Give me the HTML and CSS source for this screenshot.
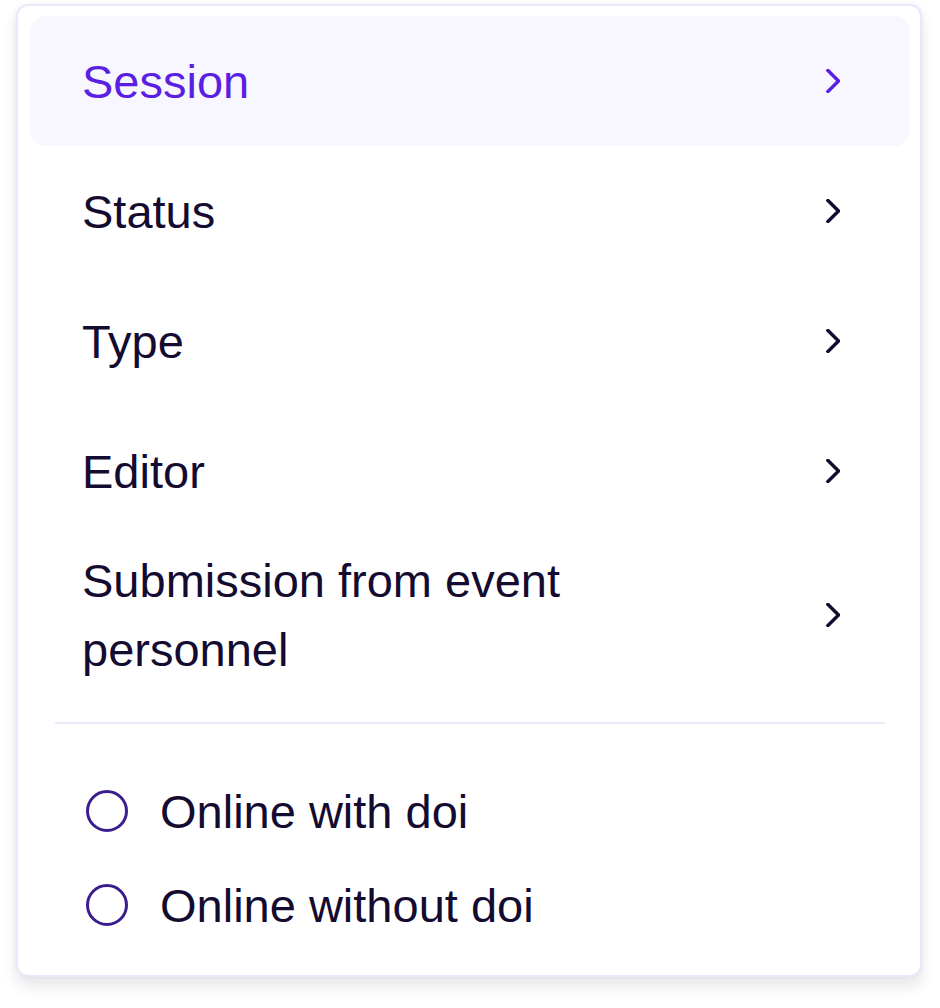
FILE: index.html
```html
<!DOCTYPE html>
<html>
<head>
<meta charset="utf-8">
<link rel="stylesheet" href="styles.css">
</head>
<body>
<div class="card">
  <ul class="menu">
    <li class="item active"><span class="label">Session</span><svg class="chev" viewBox="0 0 14 24"><path d="M2 1.5 L12.5 12 L2 22.5"/></svg></li>
    <li class="item"><span class="label">Status</span><svg class="chev" viewBox="0 0 14 24"><path d="M2 1.5 L12.5 12 L2 22.5"/></svg></li>
    <li class="item"><span class="label">Type</span><svg class="chev" viewBox="0 0 14 24"><path d="M2 1.5 L12.5 12 L2 22.5"/></svg></li>
    <li class="item"><span class="label">Editor</span><svg class="chev" viewBox="0 0 14 24"><path d="M2 1.5 L12.5 12 L2 22.5"/></svg></li>
    <li class="item multi"><span class="label">Submission from event personnel</span><svg class="chev" viewBox="0 0 14 24"><path d="M2 1.5 L12.5 12 L2 22.5"/></svg></li>
  </ul>
  <div class="sep"></div>
  <ul class="options">
    <li class="option"><span class="radio"></span><span class="label">Online with doi</span></li>
    <li class="option"><span class="radio"></span><span class="label">Online without doi</span></li>
  </ul>
</div>
</body>
</html>
```

FILE: styles.css
```css
html, body {
  margin: 0;
  padding: 0;
  background: #ffffff;
}
body {
  font-family: "Liberation Sans", Arial, sans-serif;
  color: #140b31;
  min-height: 1008px;
}
.card {
  box-sizing: border-box;
  margin: 4px 0 0 16px;
  width: 906px;
  height: 973px;
  background: #ffffff;
  border: 2px solid #ebe7fb;
  border-radius: 12px;
  box-shadow: 0 10px 14px rgba(40, 30, 70, 0.1), 0 0 6px rgba(40, 30, 70, 0.05);
  padding: 10px 10px 0 12px;
}
.menu, .options {
  list-style: none;
  margin: 0;
  padding: 0;
}
.item {
  box-sizing: border-box;
  display: flex;
  align-items: center;
  justify-content: space-between;
  min-height: 130px;
  padding: 10px 70px 10px 52px;
  border-radius: 16px;
  font-size: 47px;
  line-height: 69px;
}
.item.active {
  background: #f8f6fe;
  color: #5b1fe3;
}
.item.multi .label {
  max-width: 520px;
}
.chev {
  width: 14px;
  height: 24px;
  flex: none;
  fill: none;
  stroke: currentColor;
  stroke-width: 3.4;
  stroke-linecap: square;
}
.sep {
  height: 2px;
  background: #ebe7f8;
  margin: 28px 25px 0 25px;
}
.options {
  padding-top: 40px;
}
.option {
  display: flex;
  align-items: center;
  height: 94px;
  padding-left: 56px;
  font-size: 47px;
}
.radio {
  box-sizing: border-box;
  width: 42px;
  height: 42px;
  border: 3px solid #3a1d8f;
  border-radius: 50%;
  margin-right: 32px;
  flex: none;
}
```
